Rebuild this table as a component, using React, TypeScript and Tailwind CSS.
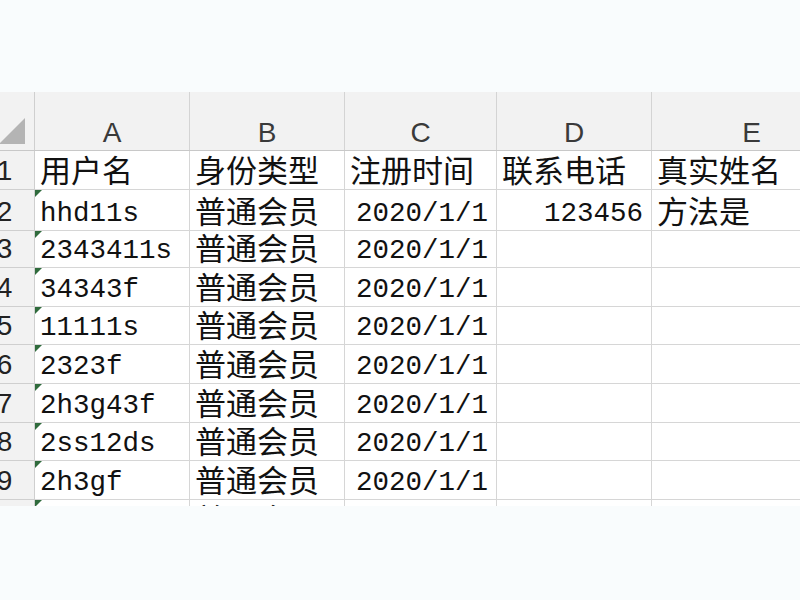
const columns = [
  { key: 'A', width: 'w-[155px]' },
  { key: 'B', width: 'w-[155px]' },
  { key: 'C', width: 'w-[152px]' },
  { key: 'D', width: 'w-[155px]' },
  { key: 'E', width: 'w-[200px]' },
];

const rows: string[][] = [
  ['用户名', '身份类型', '注册时间', '联系电话', '真实姓名'],
  ['hhd11s', '普通会员', '2020/1/1', '123456', '方法是'],
  ['2343411s', '普通会员', '2020/1/1', '', ''],
  ['34343f', '普通会员', '2020/1/1', '', ''],
  ['11111s', '普通会员', '2020/1/1', '', ''],
  ['2323f', '普通会员', '2020/1/1', '', ''],
  ['2h3g43f', '普通会员', '2020/1/1', '', ''],
  ['2ss12ds', '普通会员', '2020/1/1', '', ''],
  ['2h3gf', '普通会员', '2020/1/1', '', ''],
  ['', '普通会员', '2020/1/1', '', ''],
];

const heights = ['h-[39px]', 'h-[41px]', 'h-[37px]', 'h-[39px]', 'h-[38px]', 'h-[39px]', 'h-[39px]', 'h-[38px]', 'h-[39px]', 'h-[39px]'];

const isCjk = (s: string) => /[\u4e00-\u9fff]/.test(s);
// numbers and dates sit on the right, like Excel does
const isRight = (s: string) => /^[\d/]+$/.test(s);

function Cell({ value, width, flag }: { value: string; width: string; flag?: boolean }) {
  const right = value !== '' && isRight(value) && !flag;
  return (
    <div
      className={`relative ${width} shrink-0 flex items-end pb-[2px] border-r border-b border-[#d6d6d6] bg-white overflow-hidden ${
        right ? 'justify-end pr-[8px]' : 'pl-[5px]'
      }`}
    >
      {flag && (
        <div className="absolute left-0 top-0 w-0 h-0 border-t-[7px] border-r-[7px] border-t-[#2f6b3c] border-r-transparent" />
      )}
      {value &&
        (isCjk(value) ? (
          <span className="font-['Noto_Sans_CJK_SC','Noto_Sans_CJK_JP',sans-serif] text-[31px] leading-[36px] text-[#111] whitespace-nowrap">
            {value}
          </span>
        ) : (
          <span className="font-['Liberation_Mono',monospace] text-[27.5px] leading-[28px] text-[#111] whitespace-nowrap">
            {value}
          </span>
        ))}
    </div>
  );
}

export default function App() {
  return (
    <div className="w-[800px] h-[600px] bg-[#f9fcfd] overflow-hidden pt-[92px]">
      <div className="h-[414px] overflow-hidden flex flex-col">
        {/* column letters */}
        <div className="flex h-[59px] shrink-0 bg-[#f2f2f2] border-b border-[#c8c8c8]">
          <div className="relative w-[60px] -ml-[25px] shrink-0 border-r border-[#cfcfcf]">
            <svg className="absolute left-[24px] top-[26px]" width="26" height="26" viewBox="0 0 26 26">
              <polygon points="26,0 26,26 0,26" fill="#b4b4b4" />
            </svg>
          </div>
          {columns.map((c) => (
            <div
              key={c.key}
              className={`${c.width} shrink-0 flex items-center justify-center pt-[24px] border-r border-[#d4d4d4] font-['Liberation_Sans',sans-serif] text-[28px] leading-[30px] text-[#3a3a3a]`}
            >
              {c.key}
            </div>
          ))}
        </div>

        {rows.map((row, i) => (
          <div key={i} className={`flex ${heights[i]} shrink-0`}>
            <div className="w-[60px] -ml-[25px] shrink-0 flex items-end justify-center pb-[2px] bg-[#f2f2f2] border-r border-b border-[#cfcfcf] font-['Liberation_Sans',sans-serif] text-[28px] leading-[32px] text-[#222]">
              {i + 1}
            </div>
            {row.map((v, j) => (
              <Cell key={j} value={v} width={columns[j].width} flag={j === 0 && i > 0} />
            ))}
          </div>
        ))}
      </div>
    </div>
  );
}
